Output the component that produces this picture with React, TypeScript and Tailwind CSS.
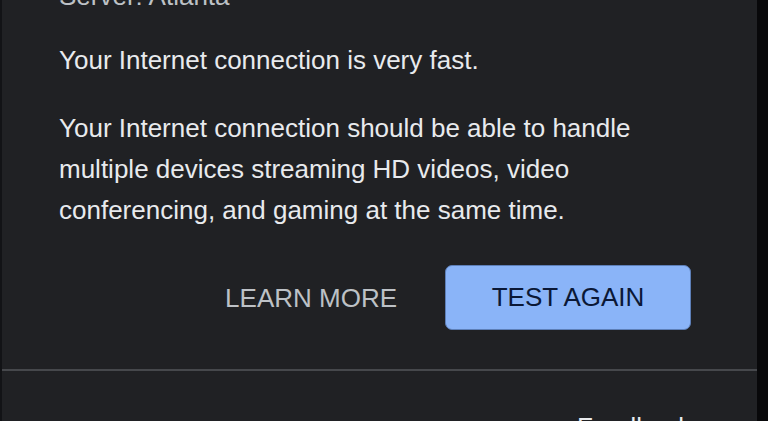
export default function App() {
  return (
    <div className="w-[768px] h-[421px] overflow-hidden bg-[#08080a] flex font-['Liberation_Sans',Arial,sans-serif]">
      <div className="w-[2px] shrink-0 bg-[#121316]" />
      <div className="w-[755px] shrink-0 bg-[#202124] flex flex-col">
        {/* Result text */}
        <div className="shrink-0 pl-[57px] -mt-[20px] flex flex-col">
          <p className="text-[26px] leading-[32px] text-[#bdc1c6]">Server: Atlanta</p>
          <p className="mt-[32px] text-[26px] leading-[32px] text-[#e8eaed]">
            Your Internet connection is very fast.
          </p>
          <p className="mt-[32px] w-[640px] text-[26px] leading-[41px] text-[#e8eaed]">
            Your Internet connection should be able to handle multiple devices streaming HD videos, video conferencing, and gaming at the same time.
          </p>
        </div>

        {/* Actions */}
        <div className="shrink-0 mt-[34px] pr-[66px] flex items-center justify-end gap-[48px]">
          <button className="text-[26px] leading-[32px] text-[#bdc1c6] uppercase">Learn more</button>
          <button className="w-[246px] h-[65px] rounded-[7px] bg-[#8ab4f8] border border-[#5d7fb8] text-[26px] text-[#0b1836] uppercase">
            Test again
          </button>
        </div>

        <div className="shrink-0 mt-[39px] h-[2px] bg-[#46484c]" />

        <div className="shrink-0 mt-[40px] pl-[575px] text-[26px] leading-[32px] text-[#e8eaed]">Feedback</div>
      </div>
      <div className="flex-1 bg-[#08080a]" />
    </div>
  );
}
